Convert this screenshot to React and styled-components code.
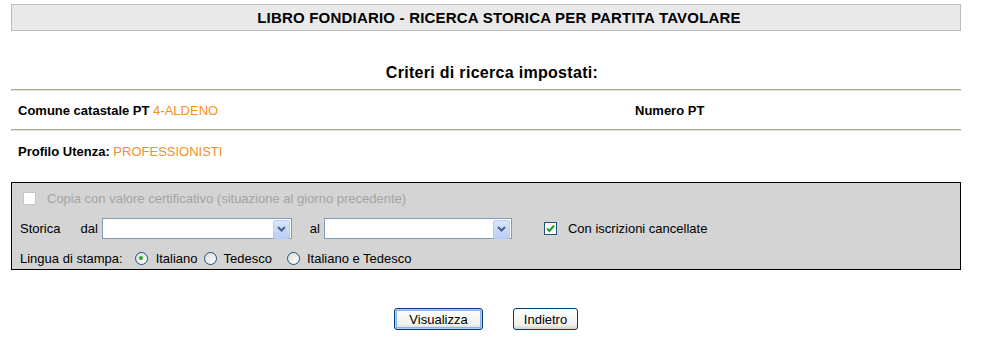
import React from 'react';
import styled, { createGlobalStyle } from 'styled-components';

const GlobalStyle = createGlobalStyle`
    body {
        margin: 0;
        padding: 4px 0 0 11px;
        background: #ffffff;
        font-family: "Liberation Sans", Arial, sans-serif;
        font-size: 13px;
        color: #000000;
    }
`;

const Page = styled.div`
    width: 950px;
`;

const TitleBar = styled.div`
    height: 25px;
    border: 1px solid #bdbdbd;
    background: #e9e9e9;
    display: flex;
    align-items: center;
    justify-content: center;
    padding-left: 26px;
    font-weight: bold;
    font-size: 15px;
    letter-spacing: 0.2px;
`;

const SectionTitle = styled.div`
    margin-top: 33px;
    padding-left: 12px;
    text-align: center;
    font-weight: bold;
    font-size: 16px;
    line-height: 18px;
    letter-spacing: 0.3px;
    padding-bottom: 7px;
`;

const Rule = styled.div`
    height: 0;
    border-top: 1px solid #aca899;
    border-bottom: 1px solid #e4e1d6;
`;

const InfoRow = styled.div`
    display: grid;
    grid-template-columns: ${({ $cols }) => $cols || '1fr'};
    align-items: center;
    height: ${({ $h }) => $h || 38}px;
    padding-left: 7px;
    font-weight: bold;
`;

const Value = styled.span`
    font-weight: normal;
    color: #f7901e;
`;

const Panel = styled.div`
    margin-top: ${({ $top }) => $top}px;
    border: 1px solid #000000;
    background: #d4d4d4;
    padding: 4px 0 0 8px;
    display: flex;
    flex-direction: column;
`;

const PanelRow = styled.div`
    display: flex;
    align-items: center;
    height: ${({ $h }) => $h || 28}px;
`;

const Label = styled.span`
    color: ${({ $disabled }) => ($disabled ? '#a3a3a3' : '#000000')};
    margin-left: ${({ $ml }) => $ml || 0}px;
    white-space: nowrap;
`;

const Box = styled.span`
    width: 11px;
    height: 11px;
    flex: none;
    margin-left: ${({ $ml }) => $ml || 0}px;
    border: 1px solid ${({ $disabled }) => ($disabled ? '#cac8bb' : '#1c5180')};
    background: #ffffff;
    display: inline-flex;
    align-items: center;
    justify-content: center;
`;

const Radio = styled.span`
    width: 11px;
    height: 11px;
    flex: none;
    margin-left: ${({ $ml }) => $ml || 0}px;
    border: 1px solid #1c5180;
    border-radius: 50%;
    background: linear-gradient(135deg, #dcdcd7, #ffffff);
    display: inline-flex;
    align-items: center;
    justify-content: center;

    &::after {
        content: '';
        width: 4px;
        height: 4px;
        border-radius: 50%;
        background: ${({ $checked }) => ($checked ? '#2ea62e' : 'transparent')};
    }
`;

const Select = styled.div`
    width: ${({ $w }) => $w}px;
    height: 21px;
    flex: none;
    box-sizing: border-box;
    margin-left: ${({ $ml }) => $ml || 0}px;
    border: 1px solid #7f9db9;
    background: #ffffff;
    display: flex;
    justify-content: flex-end;
    padding: 1px;
`;

const Arrow = styled.span`
    width: 15px;
    height: 17px;
    border: 1px solid #b9cdf4;
    border-radius: 2px;
    background: linear-gradient(#dbe6fd, #b8cdf8);
    display: flex;
    align-items: center;
    justify-content: center;
`;

const Actions = styled.div`
    display: flex;
    justify-content: center;
    gap: 30px;
    margin-top: 38px;
`;

const Button = styled.button`
    font-family: "Liberation Sans", Arial, sans-serif;
    font-size: 13px;
    height: 22px;
    width: ${({ $w }) => $w}px;
    padding: 0;
    border: 1px solid #003c74;
    border-radius: 3px;
    background: linear-gradient(#ffffff, #f0f0ea 80%, #d6d0c5);
    color: #000000;
    box-shadow: ${({ $default }) => ($default ? 'inset 0 0 0 1px #b5cef7, inset 0 0 0 2px #8fb0ea' : 'none')};
`;

const Chevron = () => (
    <svg width="9" height="6" viewBox="0 0 9 6">
        <path d="M1 1 L4.5 4.5 L8 1" stroke="#4d6185" strokeWidth="2" fill="none" />
    </svg>
);

const Check = () => (
    <svg width="9" height="9" viewBox="0 0 9 9">
        <path d="M1 4.5 L3.5 7 L8 1.5" stroke="#21a121" strokeWidth="2" fill="none" />
    </svg>
);

const App = () => (
    <Page>
        <GlobalStyle />
        <TitleBar>LIBRO FONDIARIO - RICERCA STORICA PER PARTITA TAVOLARE</TitleBar>
        <SectionTitle>Criteri di ricerca impostati:</SectionTitle>
        <Rule />
        <InfoRow $cols="617px 1fr" $h={38}>
            <span>Comune catastale PT <Value>4-ALDENO</Value></span>
            <span>Numero PT</span>
        </InfoRow>
        <Rule />
        <InfoRow $h={40}>
            <span>Profilo Utenza: <Value>PROFESSIONISTI</Value></span>
        </InfoRow>
        <Panel $top={11}>
            <PanelRow $h={22}>
                <Box $disabled $ml={3} />
                <Label $disabled $ml={11}>Copia con valore certificativo (situazione al giorno precedente)</Label>
            </PanelRow>
            <PanelRow $h={38}>
                <Label>Storica</Label>
                <Label $ml={20}>dal</Label>
                <Select $w={190} $ml={4}><Arrow><Chevron /></Arrow></Select>
                <Label $ml={18}>al</Label>
                <Select $w={188} $ml={4}><Arrow><Chevron /></Arrow></Select>
                <Box $ml={32}><Check /></Box>
                <Label $ml={11}>Con iscrizioni cancellate</Label>
            </PanelRow>
            <PanelRow $h={22}>
                <Label>Lingua di stampa:</Label>
                <Radio $checked $ml={12} />
                <Label $ml={8}>Italiano</Label>
                <Radio $ml={6} />
                <Label $ml={7}>Tedesco</Label>
                <Radio $ml={15} />
                <Label $ml={7}>Italiano e Tedesco</Label>
            </PanelRow>
        </Panel>
        <Actions>
            <Button $w={89} $default>Visualizza</Button>
            <Button $w={65}>Indietro</Button>
        </Actions>
    </Page>
);

export default App;
